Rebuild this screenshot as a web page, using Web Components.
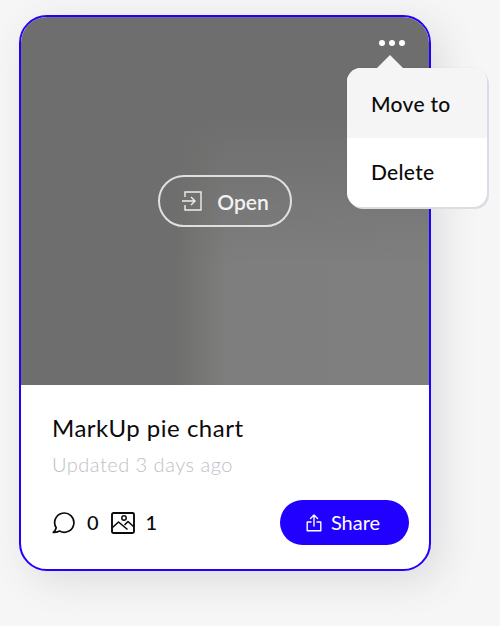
<!DOCTYPE html>
<html>
<head>
<meta charset="utf-8">
<title>Card</title>
<style>
  html, body { margin: 0; height: 626px; overflow: hidden; }
  body { background: #f6f6f6; font-family: Lato, "Noto Sans", sans-serif; padding: 15px 0 0 19px; box-sizing: border-box; }
</style>
</head>
<body>
<project-card title="MarkUp pie chart" updated="Updated 3 days ago" comments="0" images="1"></project-card>

<script>
// Dropdown with the little arrow on top
class CardMenu extends HTMLElement {
  constructor() {
    super();
    this.attachShadow({ mode: 'open' });
  }

  connectedCallback() {
    this.shadowRoot.innerHTML = `
      <style>
        :host { display: block; position: absolute; top: 53px; left: 328px; width: 140px; z-index: 2; }
        .arrow {
          position: absolute; top: -13px; left: 29px;
          width: 0; height: 0;
          border-left: 14px solid transparent;
          border-right: 14px solid transparent;
          border-bottom: 14px solid #f5f5f5;
        }
        .menu {
          border-radius: 14px;
          overflow: hidden;
          background: #fff;
          box-shadow: 2px 2px 0 #dcdce6, 0 0 2px rgba(0,0,0,0.08);
          height: 139px;
          display: flex;
          flex-direction: column;
        }
        .item {
          flex: 1;
          display: flex;
          align-items: center;
          padding-left: 24px;
          font-size: 21px;
          font-weight: 500;
          letter-spacing: 0.3px;
          color: #0b0b0b;
        }
        .item.active { background: #f5f5f5; padding-top: 1px; }
        .item:last-child { padding-bottom: 1px; }
      </style>
      <div class="arrow"></div>
      <div class="menu">
        <div class="item active">Move to</div>
        <div class="item">Delete</div>
      </div>
    `;
  }
}

class ProjectCard extends HTMLElement {
  constructor() {
    super();
    this.attachShadow({ mode: 'open' });
  }

  connectedCallback() {
    const title = this.getAttribute('title');
    const updated = this.getAttribute('updated');
    const comments = this.getAttribute('comments');
    const images = this.getAttribute('images');

    this.shadowRoot.innerHTML = `
      <style>
        :host { display: block; position: relative; width: 412px; height: 556px; }
        .card {
          box-sizing: border-box;
          width: 412px; height: 556px;
          border: 2px solid #2200ff;
          border-radius: 28px;
          background: #fff;
          overflow: hidden;
          box-shadow: 10px 10px 38px rgba(70,70,90,0.14);
          display: flex;
          flex-direction: column;
        }
        .cover {
          height: 368px;
          flex: none;
          display: flex;
          align-items: center;
          justify-content: center;
          position: relative;
          background: #6e6e6e;
        }
        /* lighter wall on the lower right of the photo */
        .cover::before {
          content: "";
          position: absolute;
          inset: 0;
          background: linear-gradient(90deg, rgba(127,127,127,0) 152px, rgba(125,125,120,0.55) 178px, #7e7e7e 206px, #7f7f7f 100%);
          -webkit-mask-image: linear-gradient(180deg, transparent 90px, #000 250px);
          mask-image: linear-gradient(180deg, transparent 90px, #000 250px);
        }
        .dots {
          position: absolute; top: 23px; right: 24px;
          display: flex; gap: 4px;
        }
        .dots i { width: 6px; height: 6px; border-radius: 50%; background: #fff; }
        .open {
          position: relative;
          box-sizing: border-box;
          width: 134px; height: 52px;
          border: 2px solid #e0e0e0;
          border-radius: 26px;
          display: flex;
          align-items: center;
          justify-content: center;
          gap: 14px;
          color: #f2f2f2;
          font-size: 21px;
          font-weight: 600;
        }
        .body {
          flex: 1;
          padding: 27px 20px 24px 31px;
          display: flex;
          flex-direction: column;
        }
        .title { font-size: 24px; line-height: 34px; color: #0b0b0b; letter-spacing: 0.5px; margin-top: -1px; }
        .updated { font-size: 20px; line-height: 28px; margin-top: 5px; color: #bebec6; font-weight: 300; letter-spacing: 0.5px; }
        .foot {
          margin-top: auto;
          display: flex;
          align-items: center;
          justify-content: space-between;
        }
        .stats {
          display: flex; align-items: center;
          font-size: 20px; font-weight: 500; color: #0b0b0b;
        }
        .stats svg { display: block; }
        .stats span { margin-left: 11px; margin-right: 12px; position: relative; top: -1px; }
        .share {
          width: 129px; height: 45px;
          border-radius: 23px;
          background: #2200ff;
          color: #fff;
          display: flex;
          align-items: center;
          justify-content: center;
          gap: 9px;
          font-size: 20px;
          line-height: 42px;
          padding-right: 3px;
          box-sizing: border-box;
        }
        .share span { position: relative; top: -1px; }
      </style>
      <div class="card">
        <div class="cover">
          <div class="dots"><i></i><i></i><i></i></div>
          <div class="open">
            <svg width="22" height="20" viewBox="0 0 22 20" fill="none" stroke="#eee" stroke-width="1.4">
              <path d="M4 6V1h16v18H4v-5"/>
              <path d="M1 10h13M10 6l4 4-4 4"/>
            </svg>
            Open
          </div>
        </div>
        <div class="body">
          <div class="title">${title}</div>
          <div class="updated">${updated}</div>
          <div class="foot">
            <div class="stats">
              <svg width="24" height="22" viewBox="0 0 24 22" fill="none" stroke="#0b0b0b" stroke-width="1.7" stroke-linejoin="round">
                <path d="M4.2 15.8A9.6 9.6 0 1 1 7.6 19c-1.6.9-3.7 1.5-6.3 1.5 1.5-1.3 2.5-2.9 2.9-4.7z"/>
              </svg>
              <span>${comments}</span>
              <svg width="24" height="22" viewBox="0 0 24 22" fill="none" stroke="#0b0b0b" stroke-width="1.9" stroke-linejoin="round">
                <rect x="1" y="1" width="22" height="20" rx="1.5"/>
                <circle cx="13" cy="6" r="2.2" stroke-width="1.5"/>
                <path d="M1.5 15.5l6-5.5 9 7.5M13.5 13l3.5-3.5 6 5.5" stroke-width="1.6"/>
              </svg>
              <span>${images}</span>
            </div>
            <div class="share">
              <svg width="16" height="18" viewBox="0 0 16 18" fill="none" stroke="#fff" stroke-width="1.4" stroke-linecap="round" stroke-linejoin="round">
                <path d="M8 12V1.5M4.5 4.5L8 1l3.5 3.5"/>
                <path d="M5 8H1.2v8.8h13.6V8H11"/>
              </svg>
              <span>Share</span>
            </div>
          </div>
        </div>
      </div>
      <card-menu></card-menu>
    `;
  }
}

customElements.define('card-menu', CardMenu);
customElements.define('project-card', ProjectCard);
</script>
</body>
</html>
